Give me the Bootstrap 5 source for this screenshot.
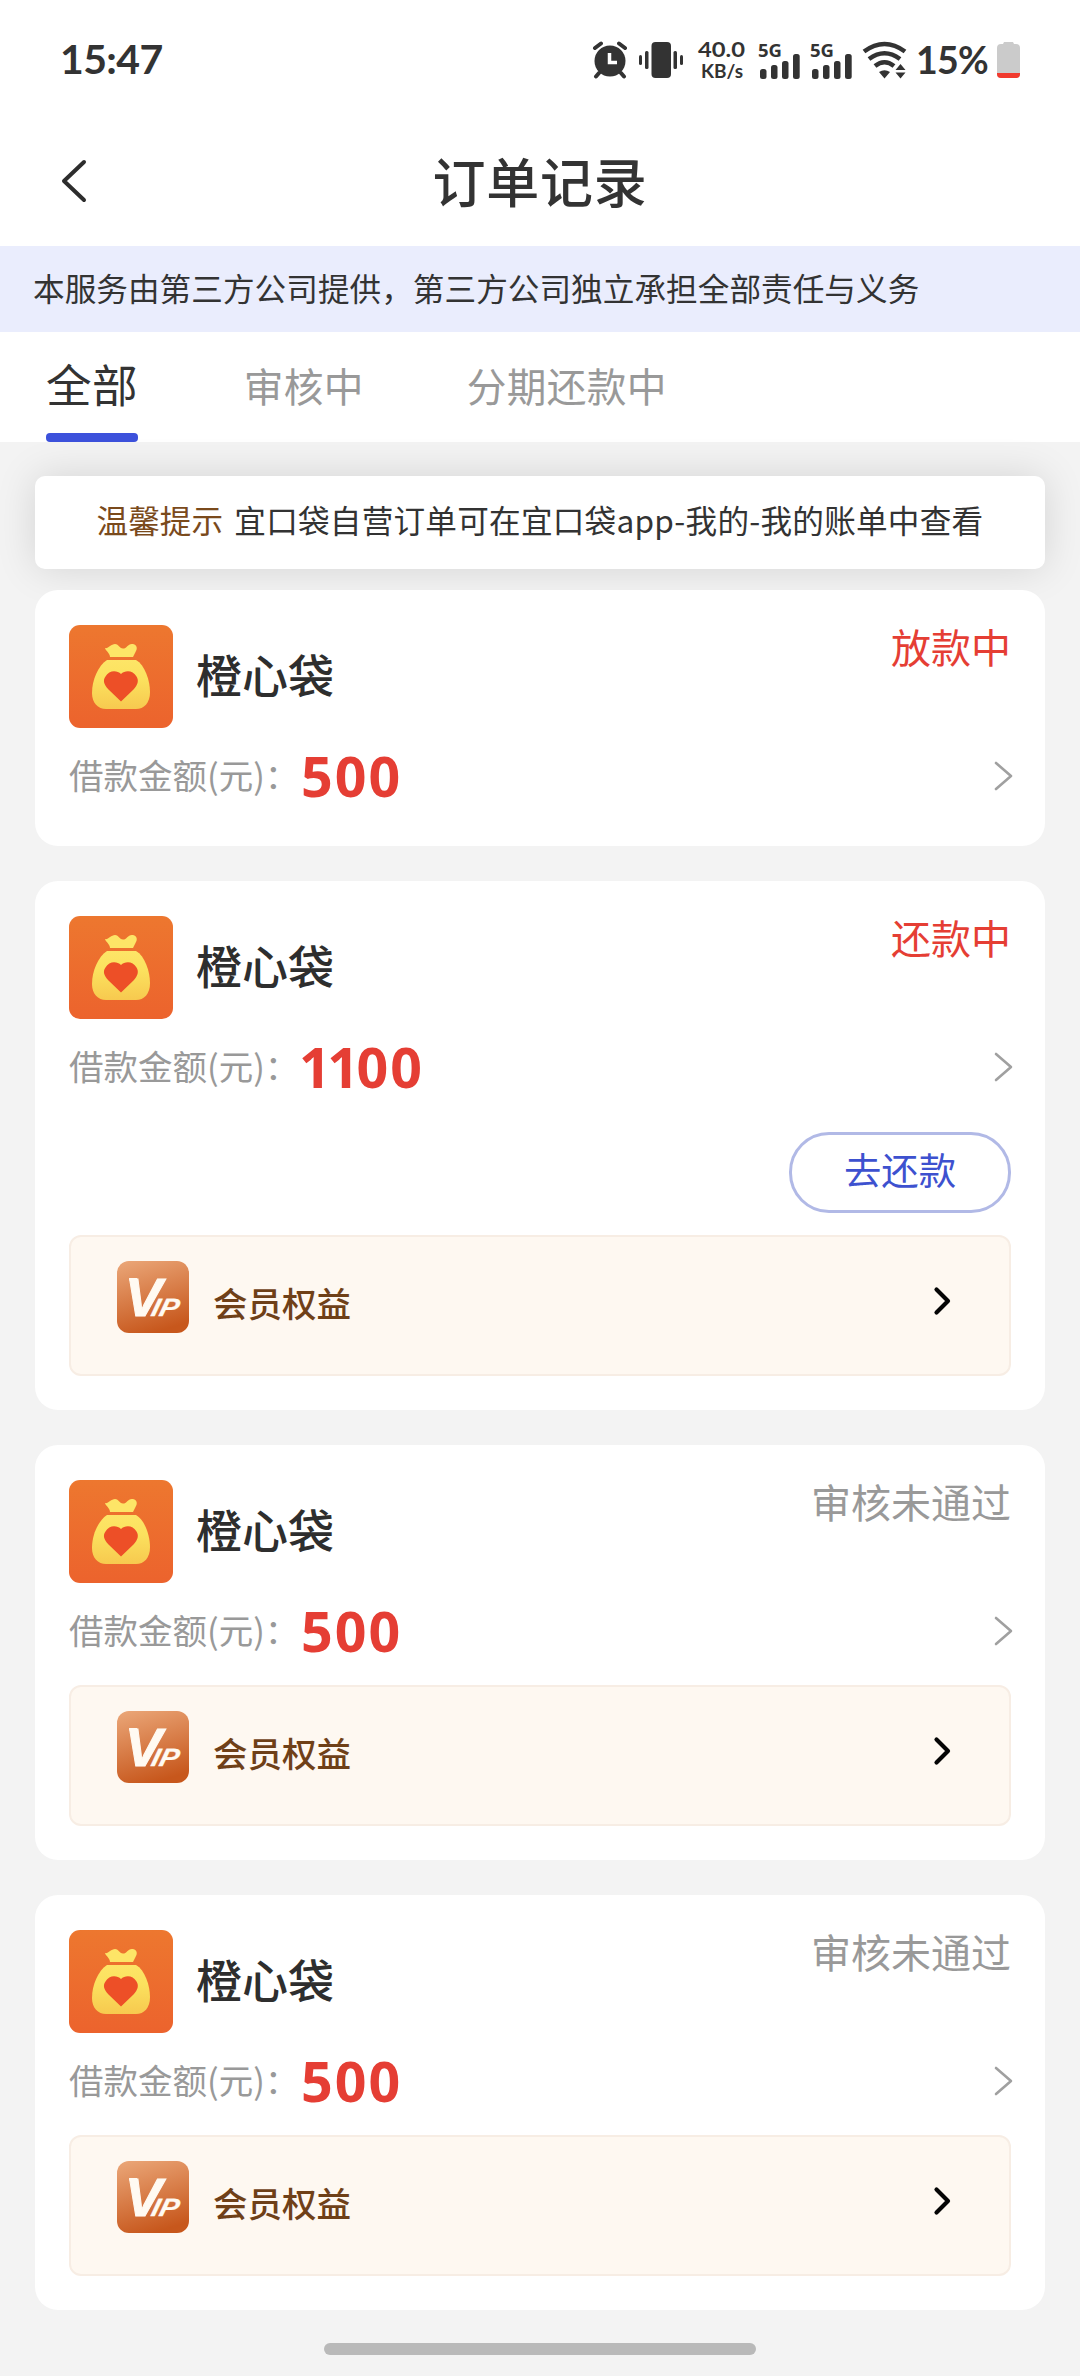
<!DOCTYPE html>
<html lang="zh-CN">
<head>
<meta charset="utf-8">
<meta name="viewport" content="width=device-width, initial-scale=1">
<title>订单记录</title>
<link href="https://cdn.jsdelivr.net/npm/bootstrap@5.3.0/dist/css/bootstrap.min.css" rel="stylesheet">
<style>
  body { width: 1080px; height: 2376px; overflow: hidden; background: #f3f3f3; color: #333; font-family: "Noto Sans CJK SC", sans-serif; line-height: 1; }
  svg { display: block; flex: none; }
  .status-line { height: 120px; padding: 0 59px 0 60px; font-family: Lato, sans-serif; font-weight: 700; color: #333; }
  .clock { font-size: 41px; letter-spacing: -.6px; padding-bottom: 3px; }
  .battery-text { font-size: 37.500px; letter-spacing: -.8px; margin-left: 7px; width: 81px; padding-left: 1px; }
  .i-gap { margin-left: 10px; }
  .title-line { height: 126px; padding: 0 60px 4px; }
  .title-line h1 { font-size: 53px; font-weight: 500; line-height: 1; letter-spacing: .8px; padding: 0 0 2px 4px; }
  .service-note { height: 86px; padding: 0 0 2px 33px; background: #eaedfd; font-size: 31.6px; letter-spacing: .06px; color: #333; }
  .order-tabs { height: 110px; padding-left: 46px; }
  .order-tabs .nav-link { padding: 0 0 4px; height: 110px; display: flex; align-items: center; color: #999; font-size: 39.7px; letter-spacing: .3px; border-radius: 0; }
  .order-tabs .nav-link.active { padding-bottom: 6px; color: #333; font-size: 45.6px; position: relative; }
  .order-tabs .nav-link.active::after { content: ""; position: absolute; left: 0; right: 0; bottom: 0; height: 9px; border-radius: 4px; background: #3c51db; }
  .order-list { padding: 34px 35px 0; }
  .tip-box { height: 93px; border-radius: 10px; margin-bottom: 21px; padding-bottom: 5px; font-size: 31.6px; box-shadow: 0 0 40px rgba(0,0,0,.13); white-space: pre; letter-spacing: .25px; color: #333; }
  .tip-box b { font-weight: 400; color: #7a4a1c; letter-spacing: 0; margin-right: 4px; }
  .order-item { position: relative; border: 0; border-radius: 23px; padding: 35px 34px 34px; margin-bottom: 35px; }
  .order-head { height: 103px; }
  .brand { font-size: 46px; font-weight: 500; margin-left: 23px; padding-bottom: 7px; color: #2e2e2e; }
  .state { font-size: 40px; height: 45px; line-height: 43px; color: #999; }
  .state-red, .amount { color: #e53e34; }
  .amount-line { height: 70px; margin-top: 13px; margin-bottom: 1px; font-size: 34.5px; color: #999; }
  .amount-line svg, .member-box .go-icon { margin-right: -3px; }
  .amount { font-family: "Noto Sans", sans-serif; font-size: 55.500px; font-weight: 700; letter-spacing: 2px; width: 400px; }
  .ones { letter-spacing: -3.500px; margin-left: -2px; margin-right: 1px; }
  .amount-label { width: 232px; white-space: nowrap; padding-bottom: 3px; }
  .pay-btn { width: 222px; height: 81px; margin-top: 29px; margin-bottom: 4px; border: 3px solid #b1b9e6; border-radius: 40px; color: #3d51cf; font-size: 37.4px; line-height: 1; padding: 0 0 5px; }
  .member-box { height: 141px; margin-top: 18px; padding: 24px 60px 0 46px; border: 2px solid #f7ede4; border-radius: 12px; background: #fef8f1; color: #6f4018; font-size: 34.5px; font-weight: 500; }
  .member-box .row-in { height: 72px; }
  .member-box .label-in { padding-top: 11px; }
  .home-bar { width: 432px; height: 12px; border-radius: 6px; background: #b9b9b9; margin-top: -2px; }
</style>
<script src="https://cdn.jsdelivr.net/npm/bootstrap@5.3.0/dist/js/bootstrap.bundle.min.js"></script>
</head>
<body>
<svg width="0" height="0" class="position-absolute">
  <defs>
    <linearGradient id="gOrange" x1="0" y1="0" x2="0" y2="1"><stop offset="0" stop-color="#ed772f"/><stop offset="1" stop-color="#ec632d"/></linearGradient>
    <linearGradient id="gBag" x1="0" y1="0" x2="0" y2="1"><stop offset="0" stop-color="#fde567"/><stop offset=".4" stop-color="#fbe15e"/><stop offset="1" stop-color="#f7c94f"/></linearGradient>
    <linearGradient id="gVip" x1=".2" y1="0" x2=".5" y2="1"><stop offset="0" stop-color="#e9a374"/><stop offset="1" stop-color="#c7571c"/></linearGradient>
    <symbol id="bag" viewBox="0 0 104 103">
      <rect width="104" height="103" rx="11" fill="url(#gOrange)"/>
      <path d="M36 23C39 24 42 19 46 19C50 19 50 23.500 54 23.500C58 23.500 59 18 64 19C68.500 20 68.500 24 66.500 27L64 32H41C41 28 36 25 36 23Z" fill="#fde567"/>
      <path d="M38 35H67C76 40 81 56 81 67C81 78 75 84 67 84H37C29 84 23 78 23 68C23 55 29 41 38 35Z" fill="url(#gBag)"/>
      <path d="M52 76.500L39.500 64.500C35 60 33.500 55 36.500 51.500C40 45 48 45 52 49C56 45 64 45 67.500 51.500C70 55 69 60 64.500 64.500Z" fill="#ed4f27"/>
    </symbol>
    <symbol id="vip" viewBox="0 0 72 72">
      <rect width="72" height="72" rx="12" fill="url(#gVip)"/>
      <g fill="#fffaf2" stroke="#fffaf2" font-family="Liberation Sans, sans-serif" font-weight="700" font-style="italic">
        <text x="8" y="55" font-size="54" stroke-width="1" textLength="37" lengthAdjust="spacingAndGlyphs">V</text>
        <text transform="translate(33 55) skewX(-14)" font-size="25" stroke-width=".3" textLength="27" lengthAdjust="spacingAndGlyphs">IP</text>
      </g>
      <path d="M12 17H20V20.500H14Q12.500 20.500 12 17Z" fill="#fffaf2"/>
    </symbol>
    <symbol id="more" viewBox="0 0 20 32"><path d="M2 3L17 16L2 29" fill="none" stroke="#a0a0a0" stroke-width="2.600" stroke-linecap="round" stroke-linejoin="round"/></symbol>
    <symbol id="go" viewBox="0 0 20 32"><path d="M4.500 4.500L16 16L4.500 27.500" fill="none" stroke="#050505" stroke-width="4.200" stroke-linecap="round" stroke-linejoin="round"/></symbol>
    <symbol id="bars" viewBox="0 -8 42 54"><g fill="#333"><rect x="2" y="28" width="6.500" height="10" rx="2.500"/><rect x="13" y="24" width="6.500" height="14" rx="2.500"/><rect x="24" y="20" width="6.500" height="18" rx="2.500"/><rect x="35" y="13" width="6.700" height="25" rx="2.500"/></g><text x="0" y="15.500" font-family="Noto Sans, sans-serif" font-weight="700" font-size="18.500" textLength="24" lengthAdjust="spacingAndGlyphs" fill="#333">5G</text></symbol>
  </defs>
</svg>

<header class="bg-white">
  <div class="status-line d-flex align-items-center justify-content-between">
    <span class="clock">15:47</span>
    <div class="d-flex align-items-center">
      <svg width="36" height="38" viewBox="0 0 36 38"><circle cx="18" cy="20" r="15.500" fill="#333"/><path d="M3 7L9 2.500M33 7L27 2.500M7 32L4 35.500M29 32L32 35.500" stroke="#333" stroke-width="4" stroke-linecap="round"/><path d="M17.500 12V21.500H25" fill="none" stroke="#fff" stroke-width="3.500"/></svg>
      <svg class="i-gap" width="46" height="38" viewBox="0 0 46 38"><g fill="#333"><rect x="13.500" y="1" width="19.500" height="36" rx="4"/><rect x="1" y="14" width="3" height="10" rx="1.500"/><rect x="7" y="10" width="3.500" height="18" rx="1.500"/><rect x="35.500" y="10" width="3.500" height="18" rx="1.500"/><rect x="42" y="14" width="3" height="10" rx="1.500"/></g></svg>
      <svg class="i-gap" width="56" height="54" viewBox="-3 -8 56 54"><g fill="#333" font-family="Lato, sans-serif" font-weight="700"><text x="1" y="16" font-size="21.500" textLength="47" lengthAdjust="spacingAndGlyphs">40.0</text><text x="4" y="36.500" font-size="19.500" textLength="42" lengthAdjust="spacingAndGlyphs">KB/s</text></g></svg>
      <svg class="ms-2" width="42" height="54"><use href="#bars"/></svg>
      <svg class="i-gap" width="42" height="54"><use href="#bars"/></svg>
      <svg class="i-gap" width="46" height="38" viewBox="0 0 46 38"><g fill="none" stroke="#333" stroke-width="4.500"><path d="M2 10.500Q22.500-4.500 43 10.500"/><path d="M7 18Q22.500 6.500 38 18"/><path d="M13 25Q22.500 17.500 32 25"/></g><path d="M17 31Q22.500 27.500 28 31L22.500 37.500Z" fill="#333"/><path d="M33.500 29L38.500 23L43.500 29ZM33.500 31.500L38.500 37.500L43.500 31.500Z" fill="#333"/></svg>
      <span class="battery-text">15%</span>
      <svg width="25" height="38" viewBox="0 0 25 38"><path d="M8 1H17L18 3H20Q24 3 24 7V33Q24 37 20 37H5Q1 37 1 33V7Q1 3 5 3H7Z" fill="#cbcbcb"/><path d="M1 32H24V33Q24 37 20 37H5Q1 37 1 33Z" fill="#f13a2e"/></svg>
    </div>
  </div>
  <div class="title-line d-flex align-items-center justify-content-between">
    <svg width="28" height="46" viewBox="0 0 28 46"><path d="M24 4L4 23L24 42" fill="none" stroke="#2d2d2d" stroke-width="4" stroke-linecap="round" stroke-linejoin="round"/></svg>
    <h1 class="m-0">订单记录</h1>
    <span class="px-3"></span>
  </div>
</header>
<div class="service-note d-flex align-items-center">本服务由第三方公司提供，第三方公司独立承担全部责任与义务</div>
<nav class="order-tabs nav bg-white flex-nowrap">
  <a class="nav-link active">全部</a>
  <a class="nav-link" style="margin-left:106px">审核中</a>
  <a class="nav-link" style="margin-left:103px">分期还款中</a>
</nav>

<main class="order-list">
  <div class="tip-box bg-white d-flex align-items-center justify-content-center"><b>温馨提示</b> 宜口袋自营订单可在宜口袋app-我的-我的账单中查看</div>

  <section class="order-item card">
    <div class="order-head d-flex"><svg width="104" height="103"><use href="#bag"/></svg><span class="brand align-self-center">橙心袋</span><span class="state state-red ms-auto">放款中</span></div>
    <div class="amount-line d-flex align-items-center"><span class="amount-label">借款金额(元)：</span><span class="amount">500</span><svg class="ms-auto" width="20" height="32"><use href="#more"/></svg></div>
  </section>

  <section class="order-item card">
    <div class="order-head d-flex"><svg width="104" height="103"><use href="#bag"/></svg><span class="brand align-self-center">橙心袋</span><span class="state state-red ms-auto">还款中</span></div>
    <div class="amount-line d-flex align-items-center"><span class="amount-label">借款金额(元)：</span><span class="amount"><span class="ones">11</span>00</span><svg class="ms-auto" width="20" height="32"><use href="#more"/></svg></div>
    <button class="btn pay-btn align-self-end">去还款</button>
    <div class="member-box"><div class="row-in d-flex align-items-center"><svg width="72" height="72"><use href="#vip"/></svg><span class="ms-4 label-in">会员权益</span><svg class="go-icon ms-auto mt-2" width="20" height="32"><use href="#go"/></svg></div></div>
  </section>

  <section class="order-item card">
    <div class="order-head d-flex"><svg width="104" height="103"><use href="#bag"/></svg><span class="brand align-self-center">橙心袋</span><span class="state ms-auto">审核未通过</span></div>
    <div class="amount-line d-flex align-items-center"><span class="amount-label">借款金额(元)：</span><span class="amount">500</span><svg class="ms-auto" width="20" height="32"><use href="#more"/></svg></div>
    <div class="member-box"><div class="row-in d-flex align-items-center"><svg width="72" height="72"><use href="#vip"/></svg><span class="ms-4 label-in">会员权益</span><svg class="go-icon ms-auto mt-2" width="20" height="32"><use href="#go"/></svg></div></div>
  </section>

  <section class="order-item card">
    <div class="order-head d-flex"><svg width="104" height="103"><use href="#bag"/></svg><span class="brand align-self-center">橙心袋</span><span class="state ms-auto">审核未通过</span></div>
    <div class="amount-line d-flex align-items-center"><span class="amount-label">借款金额(元)：</span><span class="amount">500</span><svg class="ms-auto" width="20" height="32"><use href="#more"/></svg></div>
    <div class="member-box"><div class="row-in d-flex align-items-center"><svg width="72" height="72"><use href="#vip"/></svg><span class="ms-4 label-in">会员权益</span><svg class="go-icon ms-auto mt-2" width="20" height="32"><use href="#go"/></svg></div></div>
  </section>
</main>
<div class="home-bar mx-auto"></div>
</body>
</html>
